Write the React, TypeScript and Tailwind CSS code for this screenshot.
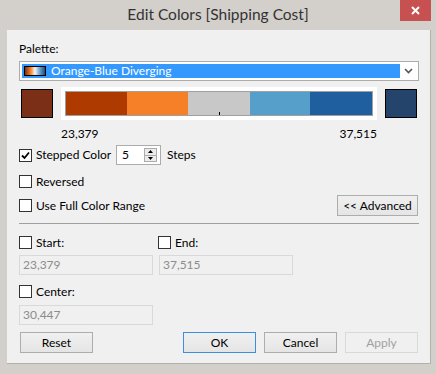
import { ReactNode } from 'react'

const font = { fontFamily: '"Segoe UI", Lato, "Liberation Sans", Arial, sans-serif' }

function Check({ checked }: { checked?: boolean }) {
    return (
        <span className="w-[13px] h-[13px] border border-[#333333] bg-white flex items-center justify-center shrink-0">
            {checked && (
                <svg width="9" height="9" viewBox="0 0 9 9">
                    <path d="M1 4.5 L3.5 7 L8 1.5" fill="none" stroke="#000" strokeWidth="1.8" />
                </svg>
            )}
        </span>
    )
}

function CheckRow({ checked, label }: { checked?: boolean; label: string }) {
    return (
        <div className="flex items-center gap-[4px] h-[13px]">
            <Check checked={checked} />
            <span className="text-[12px] text-black leading-none">{label}</span>
        </div>
    )
}

function Field({ value }: { value: string }) {
    return (
        <div className="w-[134px] h-[20px] border border-[#d9d9d9] bg-[#f0f0f0] flex items-center px-[3px] text-[12px] text-[#8c8c8c]">
            {value}
        </div>
    )
}

function Btn({ children, variant }: { children: ReactNode; variant?: 'default' | 'disabled' }) {
    const border =
        variant === 'default'
            ? 'border-[#3c8fe0]'
            : variant === 'disabled'
              ? 'border-[#d9d9d9]'
              : 'border-[#adadad]'
    const bg = variant === 'disabled' ? 'bg-[#f0f0f0]' : 'bg-gradient-to-b from-[#f0f0f0] to-[#e5e5e5]'
    const text = variant === 'disabled' ? 'text-[#a0a0a0]' : 'text-black'
    return (
        <div className={`w-[73px] h-[21px] border ${border} ${bg} ${text} flex items-center justify-center text-[12px]`}>
            {children}
        </div>
    )
}

export default function App() {
    return (
        <div className="w-[436px] h-[374px] bg-[#d3cfcb] relative" style={font}>
            {/* title bar */}
            <div className="h-[30px] flex items-center justify-center relative">
                <span className="text-[15.5px] text-[#333333]">Edit Colors [Shipping Cost]</span>
                <div className="absolute right-[5px] top-0 w-[31px] h-[21px] bg-[#c75050] flex items-center justify-center">
                    <svg width="9" height="9" viewBox="0 0 9 9">
                        <path d="M1 1 L8 8 M8 1 L1 8" stroke="#fff" strokeWidth="2" />
                    </svg>
                </div>
            </div>

            {/* client area */}
            <div className="ml-[7px] w-[424px] h-[334px] bg-[#f0f0f0] border-r border-b border-[#b4b0ac] pl-[12px] pr-[11px] pt-[11px] flex flex-col">
                <div className="h-[16px] flex items-center text-[12px] text-black">Palette:</div>

                {/* palette dropdown */}
                <div className="mt-[4px] h-[20px] w-[400px] border border-[#acacac] bg-white flex items-center pl-[2px] pr-[2px]">
                    <div className="h-[14px] w-[378px] bg-[#3399ff] flex items-center">
                        <span className="ml-[2px] w-[22px] h-[10px] border border-black bg-[linear-gradient(to_right,#7b2f16,#f68028_28%,#f4f4f4_50%,#6aaad4_72%,#1f4a7f)]" />
                        <span className="ml-[5px] text-[12px] text-white leading-none">Orange-Blue Diverging</span>
                    </div>
                    <div className="flex-1 flex items-center justify-center">
                        <svg width="9" height="6" viewBox="0 0 9 6">
                            <path d="M1 1 L4.5 4.5 L8 1" fill="none" stroke="#555" strokeWidth="1.6" />
                        </svg>
                    </div>
                </div>

                {/* swatches + ramp */}
                <div className="mt-[6px] h-[33px] flex items-center gap-[8px] pl-[2px]">
                    <div className="w-[32px] h-[29px] bg-[#7b2f16] border border-black" />
                    <div className="w-[316px] h-[33px] bg-white p-[4px]">
                        <div className="h-full border border-[#a0a0a0] flex relative">
                            <div className="w-[61px] bg-[#ae3a00]" />
                            <div className="w-[61px] bg-[#f68028]" />
                            <div className="w-[62px] bg-[#c8c8c8]" />
                            <div className="w-[60px] bg-[#569fcb]" />
                            <div className="flex-1 bg-[#1f5f9f]" />
                            <div className="absolute left-[153px] bottom-0 w-px h-[3px] bg-black" />
                        </div>
                    </div>
                    <div className="w-[32px] h-[29px] bg-[#24446c] border border-black" />
                </div>

                {/* range labels */}
                <div className="mt-[6px] h-[16px] w-[358px] flex items-center justify-between pl-[42px] text-[12px] text-black">
                    <span>23,379</span>
                    <span>37,515</span>
                </div>

                {/* stepped color */}
                <div className="mt-[3px] h-[20px] flex items-center">
                    <div className="w-[97px]">
                        <CheckRow checked label="Stepped Color" />
                    </div>
                    <div className="w-[45px] h-[20px] border border-[#acacac] bg-white flex items-center">
                        <span className="ml-[5px] flex-1 text-[12px]">5</span>
                        <div className="w-[13px] h-[14px] mr-[3px] border border-[#acacac] bg-[#ececec] flex flex-col">
                            <div className="flex-1 flex items-center justify-center border-b border-[#acacac]">
                                <svg width="5" height="3" viewBox="0 0 5 3"><path d="M0 3 L2.5 0 L5 3Z" fill="#000" /></svg>
                            </div>
                            <div className="flex-1 flex items-center justify-center">
                                <svg width="5" height="3" viewBox="0 0 5 3"><path d="M0 0 L2.5 3 L5 0Z" fill="#000" /></svg>
                            </div>
                        </div>
                    </div>
                    <span className="ml-[6px] text-[12px]">Steps</span>
                </div>

                <div className="mt-[10px]">
                    <CheckRow label="Reversed" />
                </div>

                <div className="mt-[7px] h-[21px] flex items-center justify-between w-[399px]">
                    <CheckRow label="Use Full Color Range" />
                    <div className="w-[81px] h-[21px] border border-[#adadad] bg-gradient-to-b from-[#f0f0f0] to-[#e5e5e5] flex items-center justify-center text-[12px]">
                        &lt;&lt; Advanced
                    </div>
                </div>

                <div className="mt-[7px] h-px w-[400px] bg-[#a0a0a0]" />

                {/* start / end */}
                <div className="mt-[12px] flex">
                    <div className="w-[139px]">
                        <CheckRow label="Start:" />
                    </div>
                    <CheckRow label="End:" />
                </div>
                <div className="mt-[6px] flex gap-[6px]">
                    <Field value="23,379" />
                    <Field value="37,515" />
                </div>

                <div className="mt-[10px]">
                    <CheckRow label="Center:" />
                </div>
                <div className="mt-[7px]">
                    <Field value="30,447" />
                </div>

                {/* buttons */}
                <div className="mt-[7px] flex items-center pl-[1px]">
                    <Btn>Reset</Btn>
                    <div className="ml-[90px] flex gap-[8px]">
                        <Btn variant="default">OK</Btn>
                        <Btn>Cancel</Btn>
                        <Btn variant="disabled">Apply</Btn>
                    </div>
                </div>
            </div>
        </div>
    )
}
